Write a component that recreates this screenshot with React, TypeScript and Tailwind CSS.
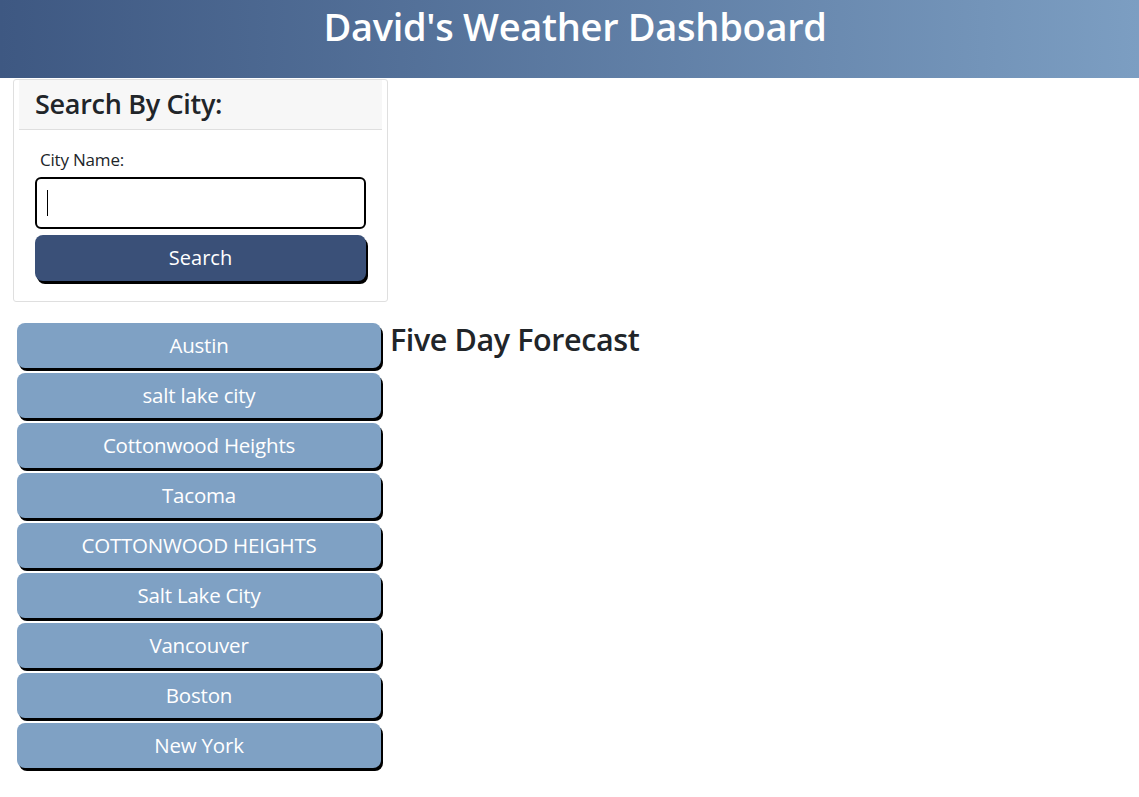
const cities = [
  "Austin",
  "salt lake city",
  "Cottonwood Heights",
  "Tacoma",
  "COTTONWOOD HEIGHTS",
  "Salt Lake City",
  "Vancouver",
  "Boston",
  "New York",
];

export default function App() {
  return (
    <div className="min-h-screen bg-white text-[#212529] font-['Open_Sans',sans-serif]">
      <header className="h-[78px] bg-gradient-to-r from-[#3e5882] to-[#7c9ec2] flex justify-center pl-[11px]">
        <h1 className="text-white text-[38px] font-semibold leading-none pt-[7px] tracking-[-0.3px]">
          David's Weather Dashboard
        </h1>
      </header>

      <div className="ml-[13px] mt-[1px] w-[375px] border border-[#dfdfdf] rounded-[3px]">
        <div className="h-[50px] bg-[#f7f7f7] border-b border-[#dfdfdf] mx-[5px] px-[16px] flex items-center">
          <h3 className="text-[27px] font-semibold tracking-[-0.3px]">Search By City:</h3>
        </div>
        <div className="px-[16px] pt-[21px] pb-[20px] mx-[5px]">
          <label className="block text-[17px] ml-[5px] leading-none mb-[9px] tracking-[-0.2px]">City Name:</label>
          <div className="h-[52px] border-2 border-black rounded-[6px] flex items-center px-[10px]">
            <span className="w-px h-[26px] bg-black"></span>
          </div>
          <button className="mt-[6px] w-full h-[46px] bg-[#3a5078] text-white text-[20px] rounded-[8px] shadow-[2px_3px_0_#000]">
            Search
          </button>
        </div>
      </div>

      <div className="flex mt-[21px] ml-[17px] gap-[9px]">
        <div className="flex flex-col gap-[5px]">
          {cities.map((city) => (
            <button
              key={city}
              className="w-[364px] h-[45px] bg-[#7fa1c4] text-white text-[20.5px] rounded-[8px] shadow-[2px_3px_0_#000] tracking-[-0.2px]"
            >
              {city}
            </button>
          ))}
        </div>

        <h2 className="text-[30.5px] font-semibold leading-none tracking-[-0.4px] pt-[1px]">Five Day Forecast</h2>
      </div>
    </div>
  );
}
